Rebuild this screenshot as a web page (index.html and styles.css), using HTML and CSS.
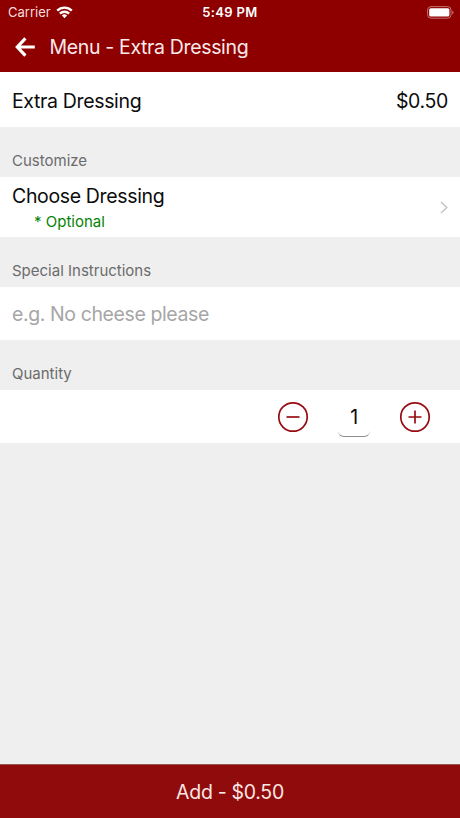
FILE: index.html
```html
<!DOCTYPE html>
<html lang="en">
<head>
    <meta charset="UTF-8">
    <meta name="viewport" content="width=device-width, initial-scale=1.0">
    <title>Menu - Extra Dressing</title>
    <link rel="stylesheet" href="styles.css">
</head>
<body>
    <header>
        <div class="status">
            <div class="carrier">
                <span>Carrier</span>
                <svg width="17" height="13" viewBox="0 0 17 13" fill="none" stroke="#fff" stroke-width="2.4">
                    <path d="M1.2 4.6a10.4 10.4 0 0 1 14.6 0M3.9 7.7a6.5 6.5 0 0 1 9.2 0"/>
                    <path d="M8.5 12.2L5.9 9.6a3.7 3.7 0 0 1 5.2 0z" fill="#fff" stroke="none"/>
                </svg>
            </div>
            <span class="time">5:49 PM</span>
            <svg class="battery" width="27" height="13" viewBox="0 0 27 13">
                <rect x=".6" y=".6" width="23.4" height="11.6" rx="3.4" fill="none" stroke="#c87070"/>
                <rect x="2.2" y="2.2" width="20.2" height="8.4" rx="1.6" fill="#fff"/>
                <path d="M25.2 4.4q1.3.6 1.3 2t-1.3 2z" fill="#c87070"/>
            </svg>
        </div>
        <div class="nav">
            <svg width="20" height="20" viewBox="0 0 20 20" fill="none" stroke="#fff" stroke-width="3.2">
                <path d="M19.8 10H2.5M10.4 1.4L2.3 10l8.1 8.6"/>
            </svg>
            <h1>Menu - Extra Dressing</h1>
        </div>
    </header>
    <main>
        <div class="row item">
            <span class="name">Extra Dressing</span>
            <span class="price">$0.50</span>
        </div>
        <h2 class="customize">Customize</h2>
        <div class="row option">
            <div>
                <p class="choose">Choose Dressing</p>
                <p class="optional">* Optional</p>
            </div>
            <svg width="8" height="13" viewBox="0 0 8 13" fill="none" stroke="#c4c4c6" stroke-width="1.5">
                <path d="M1 1l5.8 5.5L1 12"/>
            </svg>
        </div>
        <h2 class="special">Special Instructions</h2>
        <div class="row">
            <input type="text" placeholder="e.g. No cheese please">
        </div>
        <h2 class="qty-title">Quantity</h2>
        <div class="row quantity">
            <button class="round" aria-label="Less">
                <svg width="32" height="32" viewBox="0 0 32 32" fill="none" stroke="#960c12" stroke-width="1.7">
                    <circle cx="16" cy="16" r="14.2"/>
                    <path d="M9.5 16h13"/>
                </svg>
            </button>
            <span class="count">1</span>
            <button class="round" aria-label="More">
                <svg width="32" height="32" viewBox="0 0 32 32" fill="none" stroke="#960c12" stroke-width="1.7">
                    <circle cx="16" cy="16" r="14.2"/>
                    <path d="M9.5 16h13M16 9.5v13"/>
                </svg>
            </button>
        </div>
    </main>
    <button class="add"><span>Add - $0.50</span></button>
</body>
</html>
```
FILE: styles.css
```css
* {
    box-sizing: border-box;
}
body {
    font-family: Inter, sans-serif;
    margin: 0;
    height: 818px;
    display: flex;
    flex-direction: column;
    background-color: #efefef;
    color: #0c0c0c;
    overflow: hidden;
}
svg {
    display: block;
}
h1, h2, p {
    margin: 0;
    font-weight: 400;
}
header {
    height: 72px;
    background-color: #8e0000;
    color: #fff;
}
.status {
    height: 24px;
    padding: 0 6px 0 8px;
    display: grid;
    grid-template-columns: 1fr auto 1fr;
    align-items: center;
    font-size: 13px;
}
.carrier {
    display: flex;
    align-items: center;
    gap: 5px;
    color: #f6dede;
}
.time {
    font-weight: 600;
    letter-spacing: 0.35px;
    margin-right: 2px;
}
.battery {
    justify-self: end;
}
.nav {
    height: 46px;
    padding-left: 15px;
    display: flex;
    align-items: center;
    gap: 14.5px;
}
h1 {
    font-size: 19.5px;
    letter-spacing: -0.35px;
    color: #fbeaea;
}
main {
    flex: 1;
}
.row {
    height: 53px;
    padding: 0 12px;
    display: flex;
    align-items: center;
    justify-content: space-between;
    background-color: #fff;
    font-size: 19.5px;
    letter-spacing: -0.35px;
}
.item {
    height: 55px;
    padding-top: 3px;
}
h2 {
    height: 50px;
    padding: 25px 12px 0;
    font-size: 15px;
    line-height: 18px;
    color: #6b6b6b;
}
.option {
    height: 60px;
}
.choose {
    padding-top: 4px;
    line-height: 26px;
}
.optional {
    padding-left: 22px;
    font-size: 15px;
    letter-spacing: 0;
    line-height: 26px;
    color: #058205;
}
input {
    width: 100%;
    padding: 0;
    border: none;
    outline: none;
    background: none;
    font: inherit;
    letter-spacing: -0.4px;
}
input::placeholder {
    color: #a6a6a6;
}
.quantity {
    justify-content: flex-end;
    gap: 29px;
    padding: 0 29px 0 0;
}
.round {
    padding: 0;
    border: none;
    background: none;
    cursor: pointer;
}
.count {
    width: 32px;
    height: 41px;
    line-height: 43px;
    text-align: center;
    border-bottom: 1px solid #8c8c8c;
    border-radius: 6px;
}
.add {
    height: 54px;
    border: none;
    border-top: 1px solid #9c5555;
    background-color: #900b0c;
    color: #fbe6e2;
    font-family: inherit;
    font-size: 19.5px;
    letter-spacing: -0.3px;
    cursor: pointer;
}
```
